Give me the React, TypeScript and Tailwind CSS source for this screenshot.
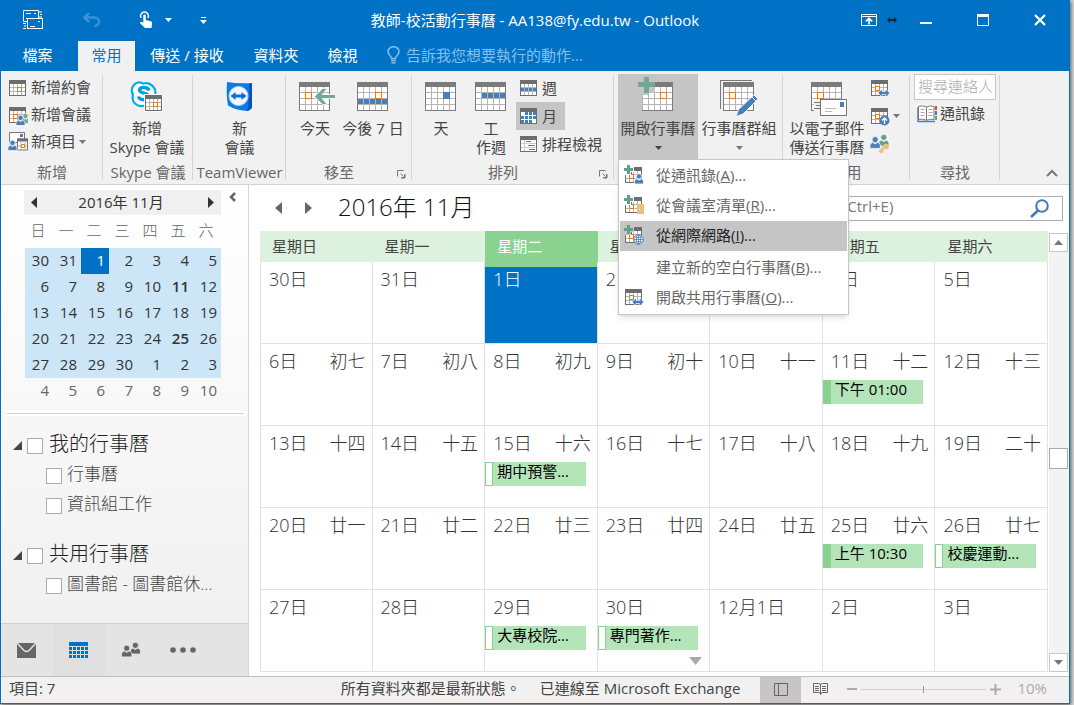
import { ReactNode } from 'react';
import clsx from 'clsx';

const GRAY = '#7b7b7b';
const LINE = '#b5b5b5';
const ORANGE = '#e07b28';
const BLUE = '#4a7ebb';
const GREEN = '#74a798';

type IconProps = { children?: ReactNode; orange?: [number, number] };

// 31x29 calendar used on the large ribbon buttons
function BigCalendar({ children, orange }: IconProps) {
  return (
    <svg width="40" height="40" viewBox="-4 -6 40 40" shapeRendering="crispEdges" aria-hidden="true">
      <rect x="0" y="0" width="31" height="29" fill={GRAY} />
      <rect x="1" y="5" width="29" height="23" fill="#fff" />
      <path
        d="M6.5 5v23M12.5 5v23M18.5 5v23M24.5 5v23M1 10.5h29M1 16.5h29M1 22.5h29"
        stroke={LINE}
        fill="none"
      />
      {orange && (
        <rect x={orange[0] + 0.5} y={orange[1] + 0.5} width="6" height="6" fill="#fff" stroke={ORANGE} />
      )}
      {children}
    </svg>
  );
}

// 17x16 calendar for the small buttons and menu entries
function SmallCalendar({ children, orange }: IconProps) {
  return (
    <svg width="20" height="20" viewBox="-1 -2 20 20" shapeRendering="crispEdges" aria-hidden="true">
      <rect x="0" y="0" width="17" height="16" fill="#6d6d6d" />
      <rect x="1" y="4" width="15" height="11" fill="#fff" />
      <path d="M4.5 4v11M8.5 4v11M12.5 4v11M1 7.5h15M1 11.5h15" stroke={LINE} fill="none" />
      {orange && (
        <rect x={orange[0] + 0.5} y={orange[1] + 0.5} width="4" height="4" fill="#fff" stroke={ORANGE} />
      )}
      {children}
    </svg>
  );
}

function Person({ x, y, color, edge = '#f0f0f0' }: { x: number; y: number; color: string; edge?: string }) {
  return (
    <g transform={`translate(${x} ${y})`} fill={color} stroke={edge} strokeWidth="0.8" shapeRendering="auto">
      <path d="M0 10.5V8.2C0 6 1.8 5.4 2.6 5.4L4.5 6.6 6.4 5.4C7.2 5.4 9 6 9 8.2v2.3z" />
      <circle cx="4.5" cy="2.9" r="2.7" />
    </g>
  );
}

function SmallPlus({ edge = '#fff' }: { edge?: string }) {
  return (
    <>
      <path d="M-1 -2h10v7h-3v3h-7z" fill={edge} />
      <path d="M2 -2h3v3h3v3h-3v3h-3v-3h-3v-3h3z" fill="#5fa287" />
      <path d="M.5 8v8M6 5v2" stroke="#6d6d6d" />
    </>
  );
}

const doubleArrow = (
  <path
    d="M7 13l4-4v2.500h3.500V9l4.500 4-4.500 4v-2.500H11V17z"
    fill={BLUE}
    stroke="#fff"
    strokeWidth="0.6"
    shapeRendering="auto"
  />
);

function Caret({ className }: { className?: string }) {
  return (
    <svg width="7" height="4" viewBox="0 0 7 4" className={className} aria-hidden="true">
      <path d="M0 0h7L3.500 4z" fill="currentColor" />
    </svg>
  );
}

function Launcher() {
  return (
    <button type="button" aria-label="更多選項" className="absolute right-[6px] bottom-[5px]">
      <svg width="9" height="9" viewBox="0 0 9 9" fill="none" stroke="#777">
        <path d="M.5 6.500v-6h6M3.500 3.500l3 3M8 4v4H4M7.500 4.500v3h-3" />
      </svg>
    </button>
  );
}

type GroupProps = { label?: string; width: string; launcher?: boolean; children: ReactNode };

function Group({ label, width, launcher, children }: GroupProps) {
  return (
    <section className={clsx('relative flex shrink-0 flex-col pt-[3px]', width)}>
      <div className="flex h-[85px] items-start">{children}</div>
      <div className={clsx('flex h-[25px] items-center justify-center pt-px text-[#666]', launcher && 'pr-5')}>
        {label}
      </div>
      {launcher && <Launcher />}
      <span className="absolute top-1 right-0 bottom-1 w-px bg-[#d5d5d5]" />
    </section>
  );
}

type BigButtonProps = { icon: ReactNode; lines: string[]; width: string; caret?: boolean; active?: boolean };

function BigButton({ icon, lines, width, caret, active }: BigButtonProps) {
  return (
    <button
      type="button"
      className={clsx('flex h-[85px] flex-col items-center pt-[2px] leading-[19px]', width, active && 'bg-[#c5c5c5]')}
    >
      <span className="flex h-[43px] items-start justify-center">{icon}</span>
      {lines.map((line) => (
        <span key={line}>{line}</span>
      ))}
      {caret && <Caret className={clsx('mt-2', !active && 'text-[#777]')} />}
    </button>
  );
}

function TitleBar() {
  return (
    <header className="grid h-10 grid-cols-[1fr_auto_1fr] items-center bg-[#0072c6] pb-[2px] text-white">
      <div className="flex items-center pl-[22px]">
        <svg width="20" height="20" viewBox="0 0 20 20" fill="none" stroke="#fff" aria-hidden="true">
          <path d="M15.500 8V.5H.5v11h4M3 3.500h5M3 8.500h3M11 3.500h2M16 2h3M17 4.500h2M16 7h3M0 13.500h3M1 16h2M0 18.500h3" />
          <rect x="4.500" y="8.500" width="15" height="10" fill="#0072c6" />
          <path d="M7 16.500h5M15 11.500h2" />
        </svg>
        <button type="button" aria-label="復原" className="ml-10 text-[#3b92d8]">
          <svg width="18" height="16" viewBox="0 0 18 16" fill="none" stroke="currentColor" strokeWidth="2.400">
            <path d="M6 1L1.500 5.500 6 10M2 5.500h9.500c6 0 6 8.500 0 8.500" />
          </svg>
        </button>
        <button type="button" aria-label="觸控/滑鼠模式" className="ml-[38px] flex items-center">
          <svg width="14" height="18" viewBox="0 0 14 18">
            <path d="M2 7a4 4 0 1 1 7 0" fill="none" stroke="#fff" strokeWidth="1.500" />
            <path
              d="M4.300 4.500a1.300 1.300 0 0 1 2.500 0V9l5 1.200q1.500.5 1.300 2L12.500 17H6L1.200 12.200q-.8-1.500 1-1.500l2.100 1z"
              fill="#fff"
            />
          </svg>
          <Caret className="ml-3" />
        </button>
        <button type="button" aria-label="自訂快速存取工具列" className="ml-7">
          <svg width="7" height="7" viewBox="0 0 7 7" fill="#fff">
            <path d="M1 0h5v1H1zM0 3h7L3.500 7z" />
          </svg>
        </button>
      </div>
      <h1 className="leading-5">教師-校活動行事曆 - AA138@fy.edu.tw - Outlook</h1>
      <div className="flex items-center justify-end pr-[23px]">
        <button type="button" aria-label="功能區顯示選項">
          <svg width="16" height="12" viewBox="0 0 16 12" fill="none" stroke="#fff">
            <path d="M.5.500h15v11H.5zM0 2.500h16" />
            <path d="M8 10.500V4.500M4.800 7.500L8 4.300l3.200 3.200" strokeWidth="1.700" />
          </svg>
        </button>
        <svg width="10" height="6" viewBox="0 0 10 6" className="ml-[10px]" aria-hidden="true">
          <path d="M0 3l3-3v2h4V0l3 3-3 3V4H3v2z" fill="#222" />
        </svg>
        <button type="button" aria-label="最小化" className="ml-[23px]">
          <svg width="12" height="12" viewBox="0 0 12 12">
            <path d="M0 8h12v2H0z" fill="#fff" />
          </svg>
        </button>
        <button type="button" aria-label="最大化" className="ml-[45px]">
          <svg width="12" height="12" viewBox="0 0 12 12">
            <path d="M.5 1.500h11v10H.5zM0 1h12v1" fill="none" stroke="#fff" />
            <path d="M0 0h12v3H0z" fill="#fff" />
          </svg>
        </button>
        <button type="button" aria-label="關閉" className="ml-[45px]">
          <svg width="12" height="12" viewBox="0 0 12 12" stroke="#fff" strokeWidth="2.200">
            <path d="M1 1l10 10M11 1L1 11" />
          </svg>
        </button>
      </div>
    </header>
  );
}

function Tabs() {
  return (
    <nav className="flex h-[30px] items-stretch bg-[#0072c6] text-white">
      <button type="button" className="w-[77px] pr-1 pb-[2px]">檔案</button>
      <button type="button" className="w-[57px] bg-[#f1f1f1] pb-[2px] text-[#0072c6]">常用</button>
      <button type="button" className="w-[104px] pb-[2px]">傳送 / 接收</button>
      <button type="button" className="w-[74px] pb-[2px]">資料夾</button>
      <button type="button" className="w-[59px] pb-[2px]">檢視</button>
      <button type="button" className="ml-[15px] flex items-center gap-[6px] pb-[2px] text-[#85c0ee]">
        <svg width="13" height="18" viewBox="0 0 13 18" fill="none" stroke="currentColor" strokeWidth="1.500">
          <path d="M4.500 12.500c0-2.500-3.500-3.500-3.500-7a5.500 4.800 0 0 1 11 0c0 3.500-3.500 4.500-3.500 7z" />
          <path d="M4 14.500h5M4.500 16.800h4" />
        </svg>
        告訴我您想要執行的動作...
      </button>
    </nav>
  );
}

const menuItems = [
  {
    text: '從通訊錄',
    hotkey: 'A',
    icon: (
      <SmallCalendar orange={[4, 7]}>
        <SmallPlus />
        <Person x={9.500} y={6.500} color={BLUE} edge="#fff" />
      </SmallCalendar>
    ),
  },
  {
    text: '從會議室清單',
    hotkey: 'R',
    icon: (
      <SmallCalendar orange={[4, 7]}>
        <SmallPlus />
        <rect x="12" y="7" width="7" height="10" fill="#e8c07d" />
        <rect x="14" y="12" width="1" height="1" fill="#fff" />
      </SmallCalendar>
    ),
  },
  {
    text: '從網際網路',
    hotkey: 'I',
    icon: (
      <SmallCalendar orange={[4, 7]}>
        <SmallPlus edge="#c5c5c5" />
        <g shapeRendering="auto" fill="#fff" stroke={BLUE}>
          <circle cx="13.500" cy="12.500" r="4.800" />
          <path d="M9 12.500h9M13.500 8v9M10 10.300h7M10 14.700h7" strokeWidth="0.800" />
          <ellipse cx="13.500" cy="12.500" rx="2.200" ry="4.500" fill="none" strokeWidth="0.800" />
        </g>
      </SmallCalendar>
    ),
  },
  { text: '建立新的空白行事曆', hotkey: 'B', icon: null },
  { text: '開啟共用行事曆', hotkey: 'O', icon: <SmallCalendar orange={[4, 6]}>{doubleArrow}</SmallCalendar> },
];

function OpenCalendarMenu() {
  return (
    <div
      role="menu"
      className="absolute top-[85px] left-0 z-10 w-[231px] border border-[#c6c6c6] bg-white p-px shadow-md"
    >
      {menuItems.map((item) => (
        <button
          key={item.hotkey}
          type="button"
          role="menuitem"
          className={clsx(
            'flex h-[30px] w-full items-center pb-[2px] pl-1 text-left',
            item.hotkey === 'I' ? 'bg-[#c5c5c5] text-[#222]' : 'text-[#666]',
            item.hotkey === 'B' && 'mt-[2px]',
          )}
        >
          <span className="w-8">{item.icon}</span>
          <span>
            {item.text}(<u>{item.hotkey}</u>)...
          </span>
        </button>
      ))}
    </div>
  );
}

function Ribbon() {
  return (
    <div className="relative flex h-[114px] border-b border-[#d2d2d2] bg-[#f1f1f1]">
      <Group label="新增" width="w-[102px]">
        <div className="pl-[7px]">
          <button type="button" className="flex h-[27px] items-center gap-[3px]">
            <SmallCalendar orange={[8, 7]} />
            新增約會
          </button>
          <button type="button" className="flex h-[27px] items-center gap-[3px]">
            <SmallCalendar orange={[4, 7]}>
              <Person x={12} y={6} color={GREEN} />
              <Person x={7} y={8} color={BLUE} />
            </SmallCalendar>
            新增會議
          </button>
          <button type="button" className="flex h-[27px] items-center gap-[3px]">
            <svg width="20" height="20" viewBox="0 0 20 20" aria-hidden="true">
              <path d="M1.500.500h15v10h-15z" fill="#fff" stroke="#777" />
              <path d="M12 2h3v3h-3z" fill={BLUE} />
              <path d="M9.500 7h10v11h-10z" fill="#fff" stroke="#777" />
              <path d="M9 6.500h11v3H9z" fill="#6d6d6d" />
              <path d="M13 10v8M17 10v8M10 14h9" stroke={LINE} />
              <path d="M13.500 12.500h3v3h-3z" fill="#fff" stroke={ORANGE} />
              <Person x={0} y={8} color={BLUE} />
            </svg>
            新項目
            <Caret className="text-[#777]" />
          </button>
        </div>
      </Group>

      <Group label="Skype 會議" width="w-[90px]">
        <BigButton
          width="w-[88px]"
          lines={['新增', 'Skype 會議']}
          icon={
            <svg width="36" height="40" viewBox="-1 -5 36 40" aria-hidden="true">
              <path
                d="M3 14C-1 6 6-1 13 2.500c8-2 14 5 12 12 4 8-4 14-10 10C7 27 1 21 3 14z"
                fill="#fff"
                stroke="#00aff0"
                strokeWidth="2.200"
              />
              <path
                d="M19 9.500c-1-4-9-4-9.500-.5s9.500 2.500 9.500 6.500-9.500 4.500-10.500 0"
                fill="none"
                stroke="#00a0dc"
                strokeWidth="3.400"
              />
              <g shapeRendering="crispEdges">
                <path d="M14 13h19v18H14z" fill="#fff" />
                <path d="M15 14h17v16H15z" fill="#6d6d6d" />
                <path d="M16 18h15v11H16z" fill="#fff" />
                <path d="M19.500 18v11M23.500 18v11M27.500 18v11M16 21.500h15M16 25.500h15" stroke={LINE} />
                <path d="M23.500 21.500h4v4h-4z" fill="#fff" stroke={ORANGE} />
              </g>
            </svg>
          }
        />
      </Group>

      <Group label="TeamViewer" width="w-[93px]">
        <BigButton
          width="w-full"
          lines={['新', '會議']}
          icon={
            <svg width="28" height="40" viewBox="0 -5 28 40" aria-hidden="true">
              <path d="M1 1q12 2 25 1v24q-1 3-5 4Q9 29 2 24.500Q0 14 1 1z" fill="#0a7bea" />
              <path d="M21 30q4-1 5-4V2l-3 1q1 14-2 27z" fill="#0a4fc0" />
              <circle cx="12.500" cy="15" r="9.500" fill="#f4f8ff" stroke="#b9d3f5" />
              <path d="M4.500 15l5-4v2.500h6V11l5 4-5 4v-2.500h-6V19z" fill="#0a6fe0" />
            </svg>
          }
        />
      </Group>

      <Group label="移至" width="w-[126px]" launcher>
        <BigButton
          width="ml-1 w-[50px]"
          lines={['今天']}
          icon={
            <BigCalendar orange={[6, 10]}>
              <path
                d="M15.500 14.500L23.500 6.500h5L23 12.500h14v4H23l5.500 6h-5z"
                fill={GREEN}
                stroke="#fff"
                strokeWidth="0.800"
                shapeRendering="auto"
              />
            </BigCalendar>
          }
        />
        <BigButton
          width="w-[66px]"
          lines={['今後 7 日']}
          icon={
            <BigCalendar orange={[18, 10]}>
              <path d="M1 17h5v5H1zM7 17h5v5H7zM13 17h5v5h-5zM19 17h5v5h-5zM25 17h5v5h-5z" fill={BLUE} />
            </BigCalendar>
          }
        />
      </Group>

      <Group label="排列" width="w-[202px]" launcher>
        <BigButton
          width="ml-1 w-[50px]"
          lines={['天']}
          icon={
            <BigCalendar>
              <path d="M18 10h7v7h-7z" fill={BLUE} />
            </BigCalendar>
          }
        />
        <BigButton
          width="w-[50px]"
          lines={['工', '作週']}
          icon={
            <BigCalendar>
              <path d="M7 11h5v5H7zM13 11h5v5h-5zM19 11h5v5h-5zM25 11h5v5h-5z" fill={BLUE} />
            </BigCalendar>
          }
        />
        <div>
          <button type="button" className="flex h-[28px] items-center gap-[3px] px-[3px]">
            <SmallCalendar>
              <path d="M1 8h3v3H1zM5 8h3v3H5zM9 8h3v3H9zM13 8h3v3h-3z" fill={BLUE} />
            </SmallCalendar>
            週
          </button>
          <button type="button" className="flex h-[28px] items-center gap-[3px] bg-[#c5c5c5] px-[3px] pr-2">
            <SmallCalendar>
              <path
                d="M5 4h3v3H5zM9 4h3v3H9zM13 4h3v3h-3zM1 8h3v3H1zM5 8h3v3H5zM9 8h3v3H9zM13 8h3v3h-3zM1 12h3v3H1zM5 12h3v3H5zM9 12h3v3H9z"
                fill={BLUE}
              />
              <path d="M4.500 4v11M8.500 4v11M12.500 4v11M1 7.500h15M1 11.500h15" stroke="#fff" />
            </SmallCalendar>
            月
          </button>
          <button type="button" className="flex h-[28px] items-center gap-[3px] px-[3px]">
            <svg width="20" height="20" viewBox="-1 -2 20 20" shapeRendering="crispEdges" aria-hidden="true">
              <path d="M0 0h17v16H0z" fill="#6d6d6d" />
              <path d="M1 4h15v11H1z" fill="#fff" />
              <path d="M4.500 4v11M1 7.500h15M1 11.500h15" stroke="#ccc" />
              <path d="M6 5h5v1H6zM9 13h6v1H9z" fill="#8e5ba6" />
              <path d="M8 9h7v1H8z" fill={BLUE} />
            </svg>
            排程檢視
          </button>
        </div>
      </Group>

      <Group width="w-[169px]">
        <div className="relative ml-1">
          <BigButton
            width="w-20"
            lines={['開啟行事曆']}
            caret
            active
            icon={
              <BigCalendar orange={[18, 10]}>
                <path d="M-4 -6h17v17h-6v3h-7v-3h-4z" fill="#c5c5c5" />
                <path d="M.5 14v14M6.500 12v16M.5 16.500h12M12.500 11v6" stroke={LINE} />
                <path d="M1 13h5v3H1zM7 12h5v4H7z" fill="#fff" />
                <path d="M-4 0h6v-5h5v5h6v5h-6v6h-5v-6h-6z" fill={GREEN} />
              </BigCalendar>
            }
          />
          <OpenCalendarMenu />
        </div>
        <BigButton
          width="w-[82px]"
          lines={['行事曆群組']}
          caret
          icon={
            <BigCalendar orange={[6, 10]}>
              <path d="M-2.500 27V-1.500H29" fill="none" stroke="#777" />
              <g shapeRendering="auto">
                <path d="M13 34.500l2.500-7L31 13l4 4-15 15z" fill={BLUE} stroke="#fff" strokeWidth="0.800" />
                <path d="M29 15l4 4" stroke="#fff" />
              </g>
            </BigCalendar>
          }
        />
      </Group>

      <Group label="共用" width="w-[127px]">
        <BigButton
          width="ml-1 w-20"
          lines={['以電子郵件', '傳送行事曆']}
          icon={
            <BigCalendar orange={[6, 10]}>
              <path d="M3 18h28v17H3z" fill="#f1f1f1" />
              <path d="M3 20h6v1H3zM5 23h4v1H5zM3 26h6v1H3z" fill="#777" />
              <path d="M9.500 17.500h26v16h-26z" fill="#fff" stroke="#777" />
              <path d="M14 26h11v1H14zM14 29h7v1h-7z" fill="#bbb" />
              <path d="M29 20h4v5h-4z" fill={BLUE} />
            </BigCalendar>
          }
        />
        <div className="flex flex-col pl-[3px]">
          <button type="button" aria-label="共用行事曆" className="flex h-[28px] items-center">
            <SmallCalendar orange={[4, 6]}>{doubleArrow}</SmallCalendar>
          </button>
          <button type="button" aria-label="線上發佈" className="flex h-[28px] items-center gap-[3px]">
            <SmallCalendar orange={[4, 6]}>
              <circle cx="13.500" cy="12.500" r="5" fill={BLUE} shapeRendering="auto" />
              <path d="M13.500 16v-5.500M11 12.500l2.500-2.500 2.500 2.500" fill="none" stroke="#fff" strokeWidth="1.300" shapeRendering="auto" />
            </SmallCalendar>
            <Caret className="text-[#777]" />
          </button>
          <button type="button" aria-label="行事曆權限" className="flex h-[28px] items-center">
            <svg width="20" height="20" viewBox="0 0 20 20" aria-hidden="true">
              <g transform="scale(1.150)">
                <Person x={7.500} y={0} color="#5fa287" />
                <Person x={0} y={2} color={BLUE} />
              </g>
              <path d="M9.500 18.500l5.500-6" stroke="#e8c07d" strokeWidth="2.600" />
              <circle cx="16" cy="12.500" r="2.800" fill="#e8c07d" />
              <path d="M12 17l1.500 1.500" stroke="#e8c07d" strokeWidth="1.500" />
            </svg>
          </button>
        </div>
      </Group>

      <Group label="尋找" width="w-[90px]">
        <div className="px-1">
          <input
            type="text"
            aria-label="搜尋連絡人"
            placeholder="搜尋連絡人"
            className="h-[26px] w-full border border-[#c6c6c6] bg-white px-[3px] pb-[2px] font-light outline-none placeholder:text-[#aaa]"
          />
          <button type="button" className="flex h-[27px] items-center gap-[3px] pl-[3px]">
            <svg width="20" height="18" viewBox="0 0 20 18" aria-hidden="true">
              <path d="M1 2.500v14h17" fill="none" stroke={BLUE} strokeWidth="1.500" />
              <path d="M1.500 1.500q4-1.500 8 .5 4-2 7.500-.5v13q-4-1-7.500.8-4-1.800-8-.8z" fill="#fff" stroke="#777" />
              <path d="M9.500 2v13" stroke="#777" />
              <path d="M3.500 4.500h4M3.500 7.500h4M3.500 10.500h4M11.500 4.500h4M11.500 7.500h4M11.500 10.500h4" stroke="#aaa" />
              <path d="M18 1h2v4h-2z" fill="#d8532c" />
              <path d="M18 6h2v4h-2z" fill={BLUE} />
              <path d="M18 11h2v4h-2z" fill="#5fa287" />
            </svg>
            通訊錄
          </button>
        </div>
      </Group>

      <button type="button" aria-label="摺疊功能區" className="absolute right-[11px] bottom-[7px]">
        <svg width="12" height="8" viewBox="0 0 12 8" fill="none" stroke="#777" strokeWidth="2">
          <path d="M1 7l5-5 5 5" />
        </svg>
      </button>
    </div>
  );
}

const weekdays = ['日', '一', '二', '三', '四', '五', '六'];

const miniWeeks = [
  [30, 31, 1, 2, 3, 4, 5],
  [6, 7, 8, 9, 10, 11, 12],
  [13, 14, 15, 16, 17, 18, 19],
  [20, 21, 22, 23, 24, 25, 26],
  [27, 28, 29, 30, 1, 2, 3],
  [4, 5, 6, 7, 8, 9, 10],
];

function MiniCalendar() {
  return (
    <div className="pt-[5px] pl-[23px]">
      <div className="flex items-start gap-2">
        <div className="flex h-[25px] w-[197px] items-center justify-between bg-[#f0f0f0] px-[7px] text-[#333]">
          <button type="button" aria-label="上個月">
            <svg width="6" height="11" viewBox="0 0 6 11"><path d="M6 0v11L0 5.500z" fill="#333" /></svg>
          </button>
          <span className="pr-[3px] pb-[2px] leading-6">2016年 11月</span>
          <button type="button" aria-label="下個月">
            <svg width="6" height="11" viewBox="0 0 6 11"><path d="M0 0v11l6-5.500z" fill="#333" /></svg>
          </button>
        </div>
        <button type="button" aria-label="最小化資料夾窗格" className="pt-[2px]">
          <svg width="7" height="10" viewBox="0 0 7 10" fill="none" stroke="#666" strokeWidth="2.500">
            <path d="M6 1L2 5l4 4" />
          </svg>
        </button>
      </div>
      <table className="ml-px w-[196px] table-fixed border-separate border-spacing-0 text-[#333]">
        <thead>
          <tr className="h-[33px] text-[#666]">
            {weekdays.map((day) => (
              <th key={day} className="p-0 pr-[2px] align-top leading-[31px] font-light">{day}</th>
            ))}
          </tr>
        </thead>
        <tbody>
          {miniWeeks.map((week, row) => (
            <tr key={row} className={clsx('h-[26px]', row < 5 ? 'bg-[#cde6f7]' : 'text-[#666]')}>
              {week.map((day, col) => (
                <td
                  key={day}
                  className={clsx(
                    'p-0 pr-1 text-right align-top leading-[24px]',
                    row === 0 && col === 2 && 'bg-[#0072c6] text-white',
                    col === 5 && (day === 11 || day === 25) && 'font-semibold',
                  )}
                >
                  {day}
                </td>
              ))}
            </tr>
          ))}
        </tbody>
      </table>
    </div>
  );
}

const folders = [
  { name: '我的行事曆', children: ['行事曆', '資訊組工作'] },
  { name: '共用行事曆', children: ['圖書館 - 圖書館休...'] },
];

const checkbox = 'mt-[3px] size-4 shrink-0 appearance-none border border-[#ababab] bg-white';

function Sidebar() {
  return (
    <aside className="flex w-[248px] shrink-0 flex-col border-r border-[#d5d5d5] bg-linear-to-b from-white to-[#efefef]">
      <MiniCalendar />
      <hr className="mt-[9px] mr-1 mb-[11px] ml-[6px] border-[#cfcfcf] outline-2 outline-white" />
      <div className="flex flex-col gap-5 pt-1 pl-3">
        {folders.map((folder) => (
          <div key={folder.name}>
            <label className="flex h-[30px] items-center text-xl font-light text-[#222]">
              <svg width="9" height="9" viewBox="0 0 9 9" className="mt-[3px] mr-[5px]" aria-hidden="true">
                <path d="M9 0v9H0z" fill="#444" />
              </svg>
              <input type="checkbox" className={clsx(checkbox, 'mr-[6px]')} />
              {folder.name}
            </label>
            {folder.children.map((child) => (
              <label key={child} className="flex h-[30px] items-center gap-[5px] pl-[33px] text-[17px] font-light">
                <input type="checkbox" className={checkbox} />
                {child}
              </label>
            ))}
          </div>
        ))}
      </div>
      <nav className="mt-auto flex h-[53px] border-t border-[#cfcfcf] bg-[#e4e4e4] text-[#666]">
        <button type="button" aria-label="郵件" className="flex w-[52px] items-center justify-center pr-px">
          <svg width="19" height="15" viewBox="0 0 19 15">
            <path d="M0 0h19v15H0z" fill="currentColor" />
            <path d="M0 0l7 7.500q2.500 2 5 0L19 0" fill="none" stroke="#e4e4e4" strokeWidth="1.500" />
          </svg>
        </button>
        <button type="button" aria-label="行事曆" className="flex w-[52px] items-center justify-center bg-[#dfdfdf] pr-px">
          <svg width="19" height="16" viewBox="0 0 19 16" fill="#0072c6" shapeRendering="crispEdges">
            <path d="M0 0h19v16H0z" />
            <path d="M0 4.500h19M0 8.500h19M0 12.500h19M3.500 4v12M7.500 4v12M11.500 4v12M15.500 4v12" stroke="#dfdfdf" />
          </svg>
        </button>
        <button type="button" aria-label="連絡人" className="flex w-[52px] items-center justify-center">
          <svg width="20" height="16" viewBox="0 0 20 16">
            <g transform="scale(1.150)">
              <Person x={8} y={0} color="#666" edge="#e4e4e4" />
              <Person x={0.500} y={2.500} color="#666" edge="#e4e4e4" />
            </g>
          </svg>
        </button>
        <button type="button" aria-label="其他" className="flex w-[52px] items-center justify-center">
          <svg width="26" height="6" viewBox="0 0 26 6" fill="currentColor">
            <circle cx="3" cy="3" r="2.800" />
            <circle cx="13" cy="3" r="2.800" />
            <circle cx="23" cy="3" r="2.800" />
          </svg>
        </button>
      </nav>
    </aside>
  );
}

type Day = { date: string; lunar?: string; event?: string; busy?: boolean; more?: boolean };

const weeks: Day[][] = [
  [{ date: '30日' }, { date: '31日' }, { date: '1日' }, { date: '2日' }, { date: '3日' }, { date: '4日' }, { date: '5日' }],
  [
    { date: '6日', lunar: '初七' },
    { date: '7日', lunar: '初八' },
    { date: '8日', lunar: '初九' },
    { date: '9日', lunar: '初十' },
    { date: '10日', lunar: '十一' },
    { date: '11日', lunar: '十二', event: '下午 01:00', busy: true },
    { date: '12日', lunar: '十三' },
  ],
  [
    { date: '13日', lunar: '十四' },
    { date: '14日', lunar: '十五' },
    { date: '15日', lunar: '十六', event: '期中預警...' },
    { date: '16日', lunar: '十七' },
    { date: '17日', lunar: '十八' },
    { date: '18日', lunar: '十九' },
    { date: '19日', lunar: '二十' },
  ],
  [
    { date: '20日', lunar: '廿一' },
    { date: '21日', lunar: '廿二' },
    { date: '22日', lunar: '廿三' },
    { date: '23日', lunar: '廿四' },
    { date: '24日', lunar: '廿五' },
    { date: '25日', lunar: '廿六', event: '上午 10:30', busy: true },
    { date: '26日', lunar: '廿七', event: '校慶運動...' },
  ],
  [
    { date: '27日' },
    { date: '28日' },
    { date: '29日', event: '大專校院...' },
    { date: '30日', event: '專門著作...', more: true },
    { date: '12月1日' },
    { date: '2日' },
    { date: '3日' },
  ],
];

function DayCell({ day, today, first }: { day: Day; today: boolean; first: boolean }) {
  return (
    <td
      className={clsx(
        'relative h-[82px] border-r border-b border-[#e1e1e1] p-0 align-top',
        first && 'border-l',
        today ? 'bg-[#0072c6] text-white' : 'text-[#333]',
      )}
    >
      {today && <div className="absolute inset-x-0 top-0 h-[5px] bg-[#8ad28f]" />}
      <div className="flex h-9 items-start justify-between pr-[6px] pl-2 text-lg leading-[34px] font-light">
        <span className="relative">{day.date}</span>
        <span>{day.lunar}</span>
      </div>
      {day.event && (
        <div className="mr-[11px] flex h-6 bg-[#b4e5b8] leading-[18px] text-black">
          <span className={clsx('mr-1 w-2 border border-[#8ad28f]', day.busy ? 'bg-[#8ad28f]' : 'bg-white')} />
          {day.event}
        </div>
      )}
      {day.more && (
        <svg width="13" height="8" viewBox="0 0 13 8" className="absolute right-[7px] bottom-[6px]" aria-hidden="true">
          <path d="M0 0h13L6.500 8z" fill="#ababab" />
        </svg>
      )}
    </td>
  );
}

function ScrollBar() {
  return (
    <div className="mt-[2px] ml-px flex w-[19px] shrink-0 flex-col bg-[#f3f3f3]">
      <button type="button" aria-label="向上捲動" className="flex h-[19px] items-center justify-center border border-[#c6c6c6] bg-white text-[#777]">
        <svg width="9" height="5" viewBox="0 0 9 5"><path d="M0 5h9L4.500 0z" fill="currentColor" /></svg>
      </button>
      <div className="flex-[16]" />
      <div className="h-[21px] border border-[#ababab] bg-white" />
      <div className="flex-[15]" />
      <button type="button" aria-label="向下捲動" className="flex h-[19px] items-center justify-center border border-[#c6c6c6] bg-white text-[#777]">
        <svg width="9" height="5" viewBox="0 0 9 5"><path d="M0 0h9L4.500 5z" fill="currentColor" /></svg>
      </button>
    </div>
  );
}

function MonthView() {
  return (
    <main className="min-w-0 flex-1 bg-white pr-px pb-[3px] pl-[11px]">
      <div className="flex h-[46px] items-center pr-[5px]">
        <button type="button" aria-label="上一頁" className="ml-[15px]">
          <svg width="7" height="12" viewBox="0 0 7 12"><path d="M7 0v12L0 6z" fill="#666" /></svg>
        </button>
        <button type="button" aria-label="下一頁" className="ml-[23px]">
          <svg width="7" height="12" viewBox="0 0 7 12"><path d="M0 0v12l7-6z" fill="#666" /></svg>
        </button>
        <h2 className="ml-[26px] pb-[2px] text-2xl leading-10 font-light text-[#111]">2016年 11月</h2>
        <label className="ml-auto flex h-[25px] w-[305px] items-center border border-[#a9adb5] px-[5px]">
          <input
            type="search"
            aria-label="搜尋行事曆"
            placeholder="搜尋行事曆 (Ctrl+E)"
            className="min-w-0 flex-1 pb-[3px] outline-none placeholder:text-[#777]"
          />
          <svg width="19" height="19" viewBox="0 0 19 19" className="mr-2" fill="none" stroke="#3f78b5" strokeWidth="2" aria-hidden="true">
            <circle cx="12" cy="7" r="5.800" />
            <path d="M8 11.500L1 18" strokeWidth="2.500" />
          </svg>
        </label>
      </div>
      <div className="flex">
        <div className="min-w-0 flex-1">
          <table className="w-full table-fixed border-separate border-spacing-0">
            <thead>
              <tr className="h-[31px]">
                {weekdays.map((day, col) => (
                  <th
                    key={day}
                    className={clsx(
                      'p-0 pl-3 text-left leading-[31px] font-normal',
                      col === 2 ? 'bg-[#8ad28f] text-white' : 'bg-[#dcf1de]',
                    )}
                  >
                    星期{day}
                  </th>
                ))}
              </tr>
            </thead>
            <tbody>
              {weeks.map((week, row) => (
                <tr key={row}>
                  {week.map((day, col) => (
                    <DayCell key={col} day={day} today={row === 0 && col === 2} first={col === 0} />
                  ))}
                </tr>
              ))}
            </tbody>
          </table>
        </div>
        <ScrollBar />
      </div>
    </main>
  );
}

function StatusBar() {
  return (
    <footer className="flex h-[27px] items-center border-t border-[#c0c0c0] bg-[#f1f1f1] pr-[22px] pl-2 leading-[23px]">
      <span className="pb-[3px]">項目: 7</span>
      <span className="ml-auto pb-[3px]">所有資料夾都是最新狀態。</span>
      <span className="ml-[19px] pb-[3px]">已連線至 Microsoft Exchange</span>
      <button type="button" aria-label="標準檢視" className="ml-5 flex h-full w-[41px] items-center justify-center bg-[#c6c6c6] pb-px">
        <svg width="14" height="13" viewBox="0 0 14 13" fill="none" stroke="#666">
          <path d="M.5.500h13v12H.5zM4.500.500v12" />
        </svg>
      </button>
      <button type="button" aria-label="閱讀檢視" className="ml-3 pb-[2px]">
        <svg width="15" height="14" viewBox="0 0 15 14" fill="none" stroke="#666">
          <path d="M.5 1.500h5q2 0 2 1.500 0-1.500 2-1.500h5v9h-5q-2 0-2 2 0-2-2-2h-5zM7.500 2v11" />
          <path d="M2 4.500h4M2 6.500h4M2 8.500h4M9 4.500h4M9 6.500h4M9 8.500h4" />
        </svg>
      </button>
      <button type="button" aria-label="縮小" className="ml-[19px] pb-[2px]">
        <svg width="10" height="10" viewBox="0 0 10 10"><path d="M0 4h10v2H0z" fill="#ababab" /></svg>
      </button>
      <input
        type="range"
        aria-label="顯示比例"
        defaultValue={50}
        className="mx-1 mb-[2px] h-[7px] w-[125px] appearance-none bg-linear-to-b from-transparent from-[3px] via-[#ababab] via-[3px] to-transparent to-[4px] [&::-webkit-slider-thumb]:h-[7px] [&::-webkit-slider-thumb]:w-px [&::-webkit-slider-thumb]:appearance-none [&::-webkit-slider-thumb]:bg-[#999]"
      />
      <button type="button" aria-label="放大" className="pb-[2px]">
        <svg width="11" height="11" viewBox="0 0 11 11"><path d="M4.500 0h2v4.500H11v2H6.500V11h-2V6.500H0v-2h4.500z" fill="#ababab" /></svg>
      </button>
      <span className="ml-4 pb-[3px] text-[#ababab]">10%</span>
    </footer>
  );
}

export default function App() {
  return (
    <div className="flex min-h-screen overflow-hidden bg-[#d8d8d8] pr-1 pb-px font-['Open_Sans','Noto_Sans_CJK_TC',sans-serif] text-[15px] whitespace-nowrap text-[#444]">
      <div className="flex min-w-0 flex-1 flex-col border border-[#0072c6] shadow-[1px_1px_4px_rgba(0,0,0,0.6)]">
        <TitleBar />
        <Tabs />
        <Ribbon />
        <div className="flex flex-1">
          <Sidebar />
          <MonthView />
        </div>
        <StatusBar />
      </div>
    </div>
  );
}
